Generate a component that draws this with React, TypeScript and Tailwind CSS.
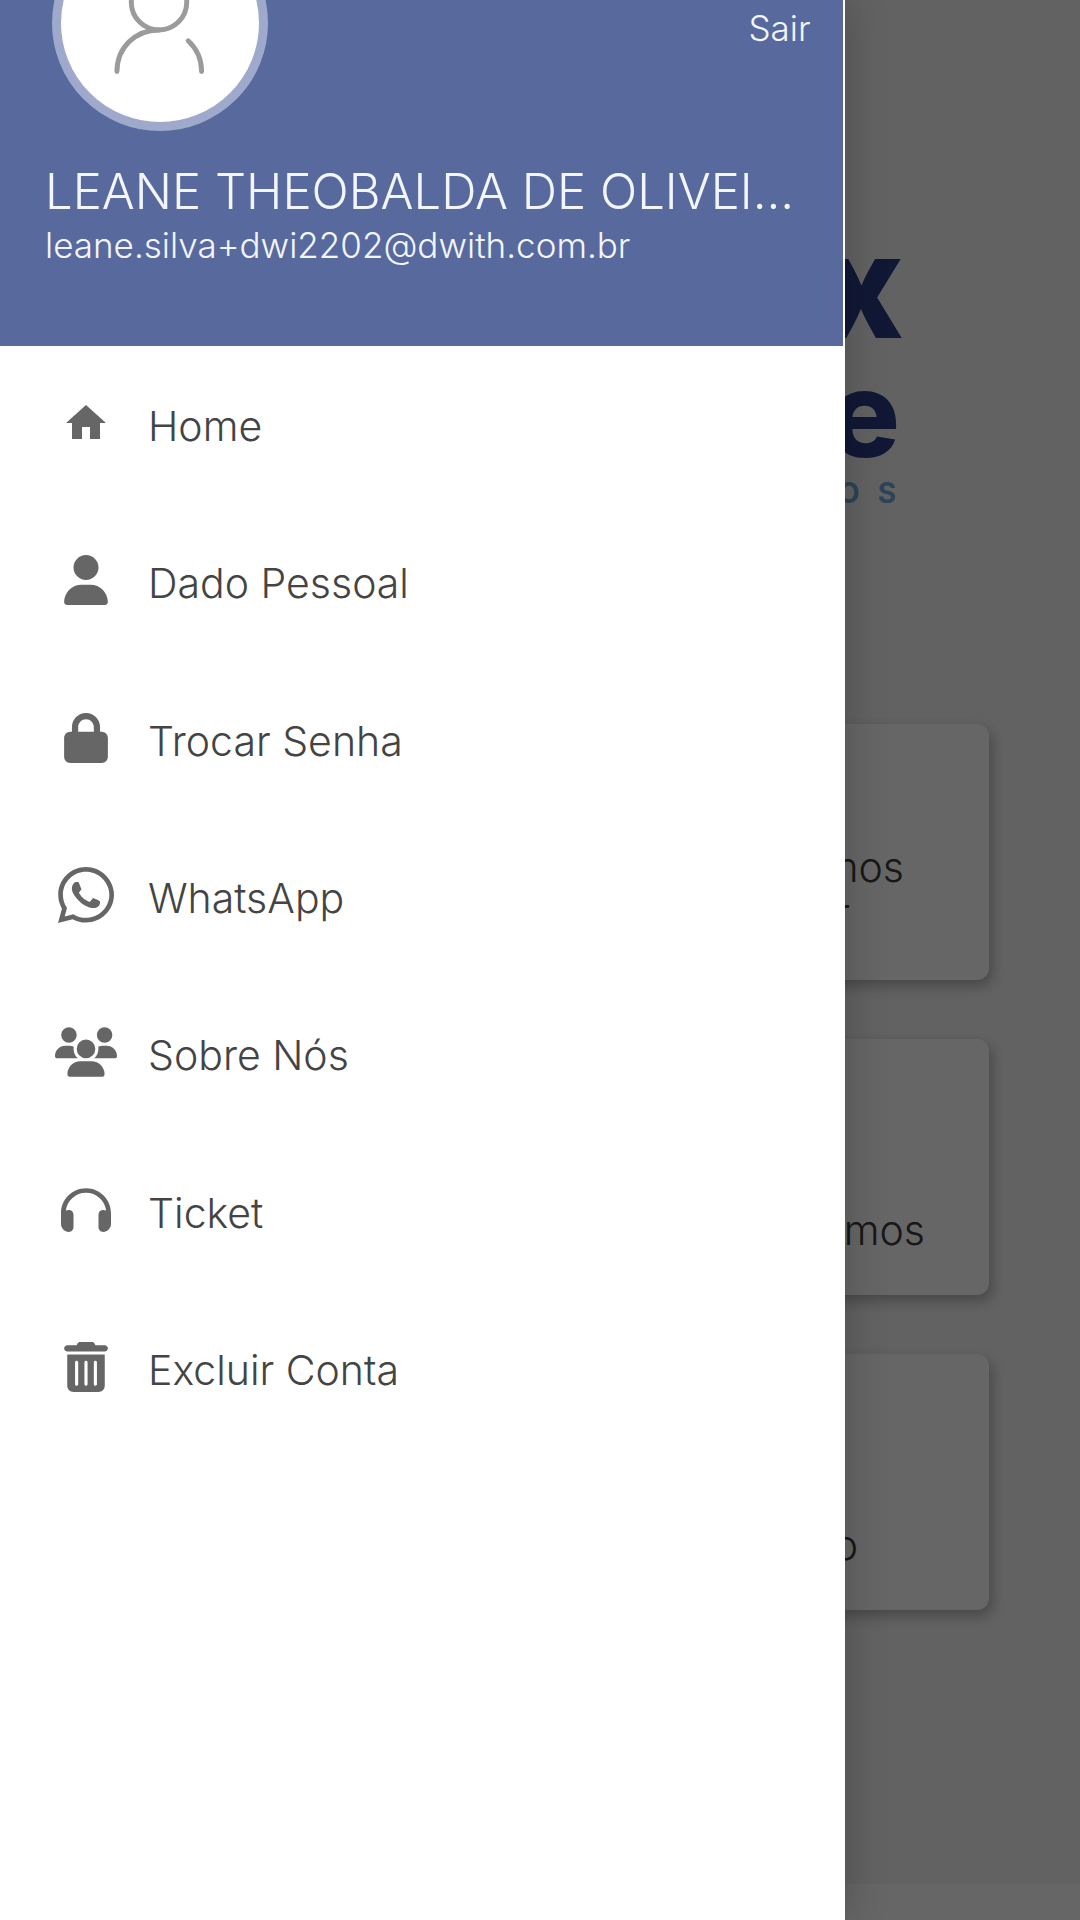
import type { ReactNode } from "react";
import { MdHome } from "react-icons/md";
import { FaHeadphones, FaLock, FaUser, FaUsers, FaWhatsapp } from "react-icons/fa6";

function TrashIcon() {
  return (
    <svg viewBox="0 0 448 512" className="h-[50px] w-11" fill="currentColor" aria-hidden="true">
      <path d="M135.2 17.7L128 32H32C14.3 32 0 46.3 0 64S14.3 96 32 96h384c17.7 0 32-14.3 32-32s-14.3-32-32-32h-96l-7.2-14.3C307.4 6.8 296.3 0 284.2 0H163.8c-12.1 0-23.2 6.8-28.6 17.7z" />
      <path
        fillRule="evenodd"
        d="M32 128h384v320c0 35.300-28.700 64-64 64H96c-35.300 0-64-28.700-64-64V128zM128 192c-8.800 0-16 7.200-16 16v224c0 8.800 7.200 16 16 16s16-7.200 16-16V208c0-8.800-7.200-16-16-16zM224 192c-8.800 0-16 7.200-16 16v224c0 8.800 7.200 16 16 16s16-7.200 16-16V208c0-8.800-7.200-16-16-16zM320 192c-8.800 0-16 7.200-16 16v224c0 8.800 7.200 16 16 16s16-7.200 16-16V208c0-8.800-7.200-16-16-16z"
      />
    </svg>
  );
}

const items: { label: string; icon: ReactNode }[] = [
  { label: "Home", icon: <MdHome size={48} /> },
  { label: "Dado Pessoal", icon: <FaUser size={50} /> },
  { label: "Trocar Senha", icon: <FaLock size={50} /> },
  { label: "WhatsApp", icon: <FaWhatsapp size={64} /> },
  { label: "Sobre Nós", icon: <FaUsers size={62} /> },
  { label: "Ticket", icon: <FaHeadphones size={50} /> },
  { label: "Excluir Conta", icon: <TrashIcon /> },
];

function Avatar() {
  return (
    <div className="size-[216px] rounded-full border-[9px] border-[#9fa9cc] bg-white">
      <svg viewBox="0 0 200 200" className="size-full" fill="none" stroke="#9b9b9b" strokeWidth="5" strokeLinecap="round" aria-hidden="true">
        <circle cx="99" cy="79" r="28" />
        <path d="M56.500 149C56.500 125 75 107 99 107" />
        <path d="M128.500 118C137 126 142 137 142 149" />
      </svg>
    </div>
  );
}

function Card({ children }: { children: ReactNode }) {
  return (
    <section className="flex h-64 flex-col items-end rounded-xl bg-white text-[41px] leading-[46px] font-light text-[#3d3d3d] shadow-[3px_6px_14px_rgba(0,0,0,0.28)]">
      {children}
    </section>
  );
}

function HomePage() {
  return (
    <main className="flex min-h-screen flex-col bg-[#f5f5f5]">
      <div className="flex h-[724px] flex-col items-end pt-[216px] pr-44 font-extrabold text-[#2b3c84]">
        <p className="text-[144px] leading-[140px]">x</p>
        <p className="pr-1 text-[120px] leading-[116px]">e</p>
        <p className="flex gap-[18px] pr-2 text-[28px] leading-[42px] font-bold text-[#6fa8dc]">
          <span>O</span>
          <span>S</span>
        </p>
      </div>
      <div className="flex flex-col gap-[59px] px-[91px]">
        <Card>
          <p className="pt-[120px] pr-[85px]">mos</p>
          <p className="pr-[139px]">r</p>
        </Card>
        <Card>
          <p className="pt-[168px] pr-16">mos</p>
        </Card>
        <Card>
          <p className="pt-[168px] pr-[131px]">o</p>
        </Card>
      </div>
      <footer className="mt-auto h-9 bg-white" />
    </main>
  );
}

export default function App() {
  return (
    <div className="relative overflow-hidden font-['Inter',sans-serif]">
      <HomePage />
      <div className="absolute inset-0 bg-black/60" />
      <aside className="absolute inset-y-0 left-0 w-[78.2%] bg-white shadow-[0_0_40px_rgba(0,0,0,0.22)]">
        <header className="mr-0.5 h-[346px] overflow-hidden bg-[#58699e] pr-8 pl-[45px] text-[#f3f6ff]">
          <div className="flex items-start justify-between">
            <div className="-mt-[85px] pl-[7px]">
              <Avatar />
            </div>
            <button type="button" className="mt-2 text-[35px] leading-10 font-light">Sair</button>
          </div>
          <h1 className="mt-8 text-[49px] leading-[58px] font-light whitespace-nowrap">LEANE THEOBALDA DE OLIVEI...</h1>
          <p className="text-[35px] leading-[48px] font-light">leane.silva+dwi2202@dwith.com.br</p>
        </header>
        <nav>
          <ul className="grid min-h-[1102px] auto-rows-fr">
            {items.map((item) => (
              <li key={item.label} className="flex">
                <a href="#" className="flex flex-1 items-center pb-1 pl-[54px] text-[#444]">
                  <span className="flex w-16 justify-center text-[#666]">{item.icon}</span>
                  <span className="pt-1.5 pl-[30px] text-[41px] leading-[46px] font-light">{item.label}</span>
                </a>
              </li>
            ))}
          </ul>
        </nav>
      </aside>
    </div>
  );
}
